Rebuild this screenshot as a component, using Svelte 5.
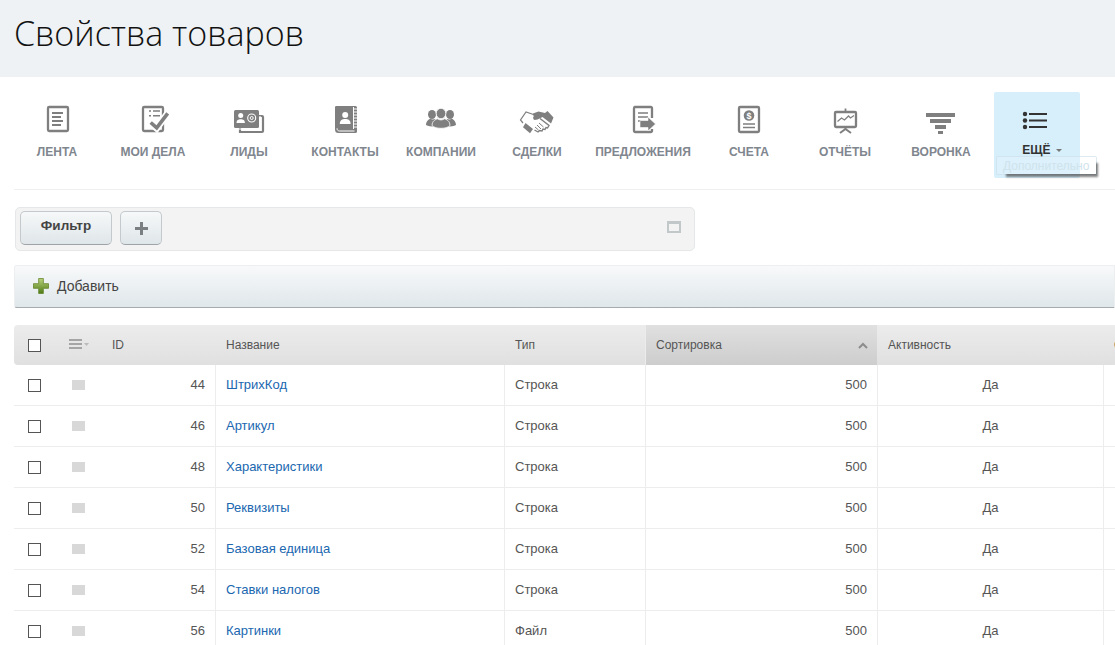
<script>
  const menu = [
    { label: "ЛЕНТА", icon: "feed" },
    { label: "МОИ ДЕЛА", icon: "tasks" },
    { label: "ЛИДЫ", icon: "leads" },
    { label: "КОНТАКТЫ", icon: "contacts" },
    { label: "КОМПАНИИ", icon: "companies" },
    { label: "СДЕЛКИ", icon: "deals" },
    { label: "ПРЕДЛОЖЕНИЯ", icon: "quotes", wide: true },
    { label: "СЧЕТА", icon: "invoices" },
    { label: "ОТЧЁТЫ", icon: "reports" },
    { label: "ВОРОНКА", icon: "funnel" },
  ];

  const rows = [
    { id: 44, name: "ШтрихКод", type: "Строка" },
    { id: 46, name: "Артикул", type: "Строка" },
    { id: 48, name: "Характеристики", type: "Строка" },
    { id: 50, name: "Реквизиты", type: "Строка" },
    { id: 52, name: "Базовая единица", type: "Строка" },
    { id: 54, name: "Ставки налогов", type: "Строка" },
    { id: 56, name: "Картинки", type: "Файл" },
  ];
</script>

<div class="page">
  <header class="head">
    <h1>Свойства товаров</h1>
  </header>

  <nav class="menu">
    {#each menu as item}
      <div class="item" class:wide={item.wide}>
        <svg class="icon" viewBox="0 0 36 36" aria-hidden="true">
          {#if item.icon === "feed"}
            <rect x="9" y="5" width="20" height="24" rx="1.2" fill="none" stroke="#7f7f7f" stroke-width="2.300" />
            <path d="M13 11h11M13 15h9M13 19h11M13 23h9" stroke="#7f7f7f" stroke-width="1.800" />
          {:else if item.icon === "tasks"}
            <rect x="8" y="5" width="20" height="24" rx="1.200" fill="none" stroke="#7f7f7f" stroke-width="2.300" />
            <path d="M14 9h2M18 9h7M14 13.700h2M18 13.700h7" stroke="#7f7f7f" stroke-width="1.600" />
            <path d="M15.700 21.300l6 5 11-15" fill="none" stroke="#fff" stroke-width="7" />
            <path d="M15.700 20.500l6 5.300 11-14.500" fill="none" stroke="#7f7f7f" stroke-width="3.600" />
          {:else if item.icon === "leads"}
            <path d="M9 14h22a1 1 0 0 1 1 1v14a1 1 0 0 1-1 1H9z" fill="none" stroke="#7f7f7f" stroke-width="2.200" />
            <rect x="3" y="8" width="25" height="18" rx="1.500" fill="#7f7f7f" />
            <path d="M7 27h22V14" fill="none" stroke="#fff" stroke-width="1.200" />
            <circle cx="9.700" cy="13.500" r="2.500" fill="#fff" />
            <path d="M5.500 21c0-3 1.800-3.800 4.200-3.800s4.200.8 4.200 3.800z" fill="#fff" />
            <circle cx="20.700" cy="16" r="4" fill="none" stroke="#fff" stroke-width="1.100" />
            <circle cx="20.700" cy="16" r="1.500" fill="none" stroke="#fff" stroke-width="1" />
          {:else if item.icon === "contacts"}
            <path d="M9.200 4h19.300a1.500 1.500 0 0 1 1.500 1.500v24a1.500 1.500 0 0 1-1.500 1.500H11.500A3.500 3.500 0 0 1 8 27.500V5.200A1.200 1.200 0 0 1 9.200 4z" fill="#7f7f7f" />
            <path d="M26.500 5v22M26.500 7h3.500M26.500 10h3.500M26.500 13h3.500M26.500 16h3.500M26.500 19h3.500M26.500 22h3.500M26.500 25h3.500M10 26.300c0 1.500.8 2.700 2.500 2.700h15" fill="none" stroke="#fff" stroke-width="1" />
            <circle cx="18.200" cy="13" r="3" fill="#fff" />
            <path d="M12.800 22c0-3.800 2.400-5 5.400-5s5.400 1.200 5.400 5z" fill="#fff" />
          {:else if item.icon === "companies"}
            <ellipse cx="9" cy="12.500" rx="4" ry="4.500" fill="#7f7f7f" />
            <path d="M3 23c.2-4 2.500-5.500 4.200-6.500 1.500 1.200 3.500 1.200 5 .2L12 24.500C8 24.500 5 24 3 23z" fill="#7f7f7f" />
            <ellipse cx="27" cy="12.500" rx="4" ry="4.500" fill="#7f7f7f" />
            <path d="M33 23c-.2-4-2.500-5.500-4.200-6.500-1.500 1.200-3.500 1.200-5 .2L24 24.500c4 0 7-.5 9-1.500z" fill="#7f7f7f" />
            <ellipse cx="18" cy="11.500" rx="4.800" ry="5.200" fill="#7f7f7f" stroke="#fff" stroke-width=".8" />
            <path d="M9 23.500c.2-4.500 3-5.800 5.500-6.700 2.200 1.500 4.800 1.500 7 0 2.500.9 5.300 2.200 5.500 6.700-2 2-5 2.800-9 2.800s-7-.8-9-2.800z" fill="#7f7f7f" stroke="#fff" stroke-width=".8" />
          {:else if item.icon === "deals"}
            <path d="M13 12l-6-2-5.500 8 2.500 3" fill="none" stroke="#7f7f7f" stroke-width="1.200" />
            <path d="M12.500 12l7-2.500 6.500 1.500 2.500-2 6 6.500-2.500 6-8.500-6.500-5 2.500-3 .5c-1.500-1-2-2.500-.5-4z" fill="#7f7f7f" />
            <path d="M21 16.500l9 7-1.500 2.500-1.500-.5-1 2-2-.5-1 2-2.500-.5-1.500 1.500-3.500-2" fill="none" stroke="#7f7f7f" stroke-width="1.400" />
            <path d="M6.500 21l7.500 6-3 4.200-7-6z" fill="#7f7f7f" />
            <path d="M20 21l4.500 4M18 23l4 4M16 25l3.500 3" stroke="#7f7f7f" stroke-width="1" />
          {:else if item.icon === "quotes"}
            <path d="M9.200 5h16.600a1.200 1.200 0 0 1 1.200 1.200V16M27 27v1.800a1.200 1.200 0 0 1-1.200 1.200H10.200A1.200 1.200 0 0 1 9 28.800V6.200A1.200 1.200 0 0 1 10.200 5" fill="none" stroke="#7f7f7f" stroke-width="2.300" />
            <path d="M13 11h10M13 15h10M13 19h3" stroke="#7f7f7f" stroke-width="1.700" />
            <path d="M15 18.500h8V15l7.500 7-7.500 7v-3.500h-8z" fill="#7f7f7f" stroke="#fff" stroke-width=".6" />
          {:else if item.icon === "invoices"}
            <rect x="8" y="5" width="20" height="25" rx="1.200" fill="none" stroke="#7f7f7f" stroke-width="2.300" />
            <circle cx="18" cy="13.500" r="5.300" fill="#7f7f7f" />
            <text x="18" y="16.800" text-anchor="middle" class="dollar">$</text>
            <path d="M12 22h12M12 25.500h12" stroke="#7f7f7f" stroke-width="1.600" />
          {:else if item.icon === "reports"}
            <path d="M18.500 6.500v3" stroke="#7f7f7f" stroke-width="1.800" />
            <rect x="8" y="10" width="21" height="15" rx="1" fill="none" stroke="#7f7f7f" stroke-width="2.300" />
            <path d="M10.500 19.500l4-3.500 3 2 4-4 2 2 3.500-2.500" fill="none" stroke="#7f7f7f" stroke-width="1.300" />
            <path d="M18.500 25v2.500M13 31l5.500-4 5.500 4" fill="none" stroke="#7f7f7f" stroke-width="2" />
          {:else if item.icon === "funnel"}
            <path d="M3 11h29v4H3zM7 17h21v4H7zM12 23h11v4H12zM15 29h5v3h-5z" fill="#7f7f7f" />
          {/if}
        </svg>
        <span class="label">{item.label}</span>
      </div>
    {/each}

    <div class="item active">
      <svg class="icon" viewBox="0 0 36 36" aria-hidden="true">
        <circle cx="6" cy="12" r="2.200" fill="#333" />
        <circle cx="6" cy="18.500" r="2.200" fill="#333" />
        <circle cx="6" cy="25" r="2.200" fill="#333" />
        <path d="M10 12h18M10 18.500h18M10 25h18" stroke="#333" stroke-width="2" />
      </svg>
      <span class="label">ЕЩЁ <i class="caret"></i></span>
      <div class="tip">Дополнительно</div>
    </div>
  </nav>

  <div class="filter">
    <button class="btn filter-btn">Фильтр</button>
    <button class="btn plus-btn" aria-label="Добавить фильтр">
      <svg width="13" height="13" viewBox="0 0 13 13"><path d="M6.500 0v13M0 6.500h13" stroke="#7b7f82" stroke-width="3" /></svg>
    </button>
    <span class="minimize"></span>
  </div>

  <div class="toolbar">
    <svg width="16" height="16" viewBox="0 0 17 17" aria-hidden="true">
      <defs>
        <linearGradient id="plusg" x1="0" y1="0" x2="0" y2="1">
          <stop offset="0" stop-color="#b9d27c" />
          <stop offset="1" stop-color="#4f7a16" />
        </linearGradient>
      </defs>
      <path d="M6 .5h5v5.500h5.500v5H11v5.500H6V11H.5V6H6z" fill="url(#plusg)" stroke="#5f8226" stroke-width=".8" />
    </svg>
    <span>Добавить</span>
  </div>

  <table class="grid">
    <colgroup>
      <col style="width:40px" />
      <col style="width:44px" />
      <col style="width:117px" />
      <col style="width:289px" />
      <col style="width:141px" />
      <col style="width:232px" />
      <col style="width:226px" />
      <col style="width:200px" />
    </colgroup>
    <thead>
      <tr>
        <th class="check"><span class="box"></span></th>
        <th class="menu-col">
          <svg width="20" height="10" viewBox="0 0 20 10" aria-hidden="true">
            <path d="M0 1h13M0 5h13M0 9h13" stroke="#a5a5a5" stroke-width="2" />
            <path d="M15 4h5l-2.500 3z" fill="#bbb" />
          </svg>
        </th>
        <th class="id-col">ID</th>
        <th>Название</th>
        <th>Тип</th>
        <th class="sorted">
          Сортировка
          <svg class="sort" width="10" height="7" viewBox="0 0 10 7" aria-hidden="true"><path d="M1 6l4-4 4 4" fill="none" stroke="#8c8c8c" stroke-width="2" /></svg>
        </th>
        <th>Активность</th>
        <th>Обязательное</th>
      </tr>
    </thead>
    <tbody>
      {#each rows as row (row.id)}
        <tr>
          <td class="check"><span class="box"></span></td>
          <td class="menu-col"><span class="grip"></span></td>
          <td class="num">{row.id}</td>
          <td><a href="#top">{row.name}</a></td>
          <td>{row.type}</td>
          <td class="num">500</td>
          <td class="center">Да</td>
          <td></td>
        </tr>
      {/each}
    </tbody>
  </table>
</div>

<style>
  :global(body) {
    margin: 0;
    background: #fff;
    overflow: hidden;
  }

  .page {
    width: 1115px;
    height: 645px;
    overflow: hidden;
    font-family: "Liberation Sans", Arial, sans-serif;
    font-size: 13px;
    color: #555;
  }

  .head {
    height: 77px;
    box-sizing: border-box;
    background: #eef2f4;
    padding: 11px 14px 0;
  }

  h1 {
    margin: 0;
    font-family: "Open Sans", sans-serif;
    font-weight: 300;
    font-size: 34px;
    line-height: 44px;
    color: #111;
  }

  .menu {
    display: flex;
    gap: 10px;
    margin: 15px 0 0 14px;
    padding-bottom: 11px;
    border-bottom: 1px solid #eef0f1;
  }

  .item {
    position: relative;
    flex: none;
    width: 86px;
    height: 86px;
    display: flex;
    flex-direction: column;
    align-items: center;
    box-sizing: border-box;
    padding-top: 10px;
    border-radius: 2px;
  }

  .item.wide {
    width: 106px;
  }

  .item.active {
    background: #d6effb;
  }

  .icon {
    width: 36px;
    height: 36px;
  }

  .dollar {
    font-size: 9px;
    font-weight: 700;
    fill: #fff;
    font-family: "Liberation Sans", sans-serif;
  }

  .label {
    margin-top: 7px;
    font-size: 12px;
    font-weight: 700;
    line-height: 15px;
    color: #80868e;
    white-space: nowrap;
  }

  .active .label {
    color: #333;
    margin-top: 5px;
    padding-left: 10px;
  }

  .caret {
    display: inline-block;
    width: 0;
    height: 0;
    margin-left: 2px;
    vertical-align: 2px;
    border-left: 3px solid transparent;
    border-right: 3px solid transparent;
    border-top: 3px solid #777;
  }

  .tip {
    position: absolute;
    left: 2px;
    top: 64px;
    width: 101px;
    height: 19px;
    box-sizing: border-box;
    padding-left: 6px;
    font-size: 12px;
    line-height: 18px;
    color: #cfe3ec;
    white-space: nowrap;
    background: rgba(255, 255, 255, 0.15);
    border: 1px solid rgba(200, 220, 230, 0.6);
    border-radius: 2px;
  }

  /* shadow only starts a bit past the left edge of the tooltip */
  .tip::before {
    content: "";
    position: absolute;
    left: 7px;
    right: 0;
    top: 3px;
    bottom: 0;
    box-shadow: 2px 3px 2px rgba(60, 60, 60, 0.65);
  }

  .filter {
    display: flex;
    align-items: flex-start;
    gap: 8px;
    position: relative;
    width: 680px;
    height: 44px;
    box-sizing: border-box;
    margin: 17px 0 0 15px;
    padding: 3px 4px;
    background: #f3f3f3;
    border: 1px solid #e5e7e8;
    border-radius: 5px;
  }

  .btn {
    height: 34px;
    padding: 0;
    background: linear-gradient(#f6f8f9, #dfe6e9);
    border: 1px solid #c3c9cc;
    border-bottom-color: #9da3a6;
    border-radius: 5px;
    font-family: "Liberation Sans", sans-serif;
    font-size: 13.5px;
    font-weight: 700;
    color: #444;
  }

  .filter-btn {
    width: 92px;
    padding-bottom: 5px;
  }

  .plus-btn {
    width: 42px;
    display: grid;
    place-items: center;
  }

  .minimize {
    position: absolute;
    right: 13px;
    top: 13px;
    width: 14px;
    height: 12px;
    box-sizing: border-box;
    border: 2px solid #c2c7ca;
    border-top-width: 3px;
  }

  .toolbar {
    display: flex;
    align-items: center;
    gap: 8px;
    height: 43px;
    box-sizing: border-box;
    margin: 14px 0 0 14px;
    padding: 0 0 1px 18px;
    background: linear-gradient(#f8f9fa, #dfe7ea);
    border: 1px solid #eceeef;
    border-bottom: 1px solid #a5abae;
    border-radius: 3px 0 0 3px;
    font-size: 14px;
    color: #444;
  }

  .grid {
    table-layout: fixed;
    width: 1289px;
    margin: 17px 0 0 14px;
    border-collapse: separate;
    border-spacing: 0;
  }

  th {
    height: 40px;
    padding: 0 0 0 11px;
    box-sizing: border-box;
    text-align: left;
    font-weight: 400;
    font-size: 12px;
    color: #555;
    background: linear-gradient(#ececec, #e0e0e0);
  }

  th:first-child {
    border-radius: 4px 0 0 4px;
  }

  th.id-col {
    padding-left: 14px;
  }

  th.sorted {
    position: relative;
    background: linear-gradient(#e0e0e0, #cdcdcd);
    border-left: 1px solid #ececec;
    padding-left: 10px;
  }

  .sort {
    position: absolute;
    right: 9px;
    top: 17px;
  }

  td {
    height: 41px;
    padding: 0 10px 2px;
    box-sizing: border-box;
    border-bottom: 1px solid #ededed;
    border-left: 1px solid #ededed;
    font-size: 13px;
    color: #555;
  }

  td.check,
  td.menu-col,
  td:nth-child(3) {
    border-left: 0;
  }

  .check,
  th.check {
    padding: 0 0 0 14px;
  }

  .menu-col,
  th.menu-col {
    padding: 0 0 0 15px;
  }

  .box {
    display: block;
    width: 11px;
    height: 11px;
    background: #fff;
    border: 1px solid #555;
  }

  .grip {
    display: block;
    width: 13px;
    height: 10px;
    margin-left: 3px;
    background: #d8d8d8;
  }

  .num {
    text-align: right;
  }

  .center {
    text-align: center;
  }

  a {
    color: #2067b0;
    text-decoration: none;
  }
</style>
